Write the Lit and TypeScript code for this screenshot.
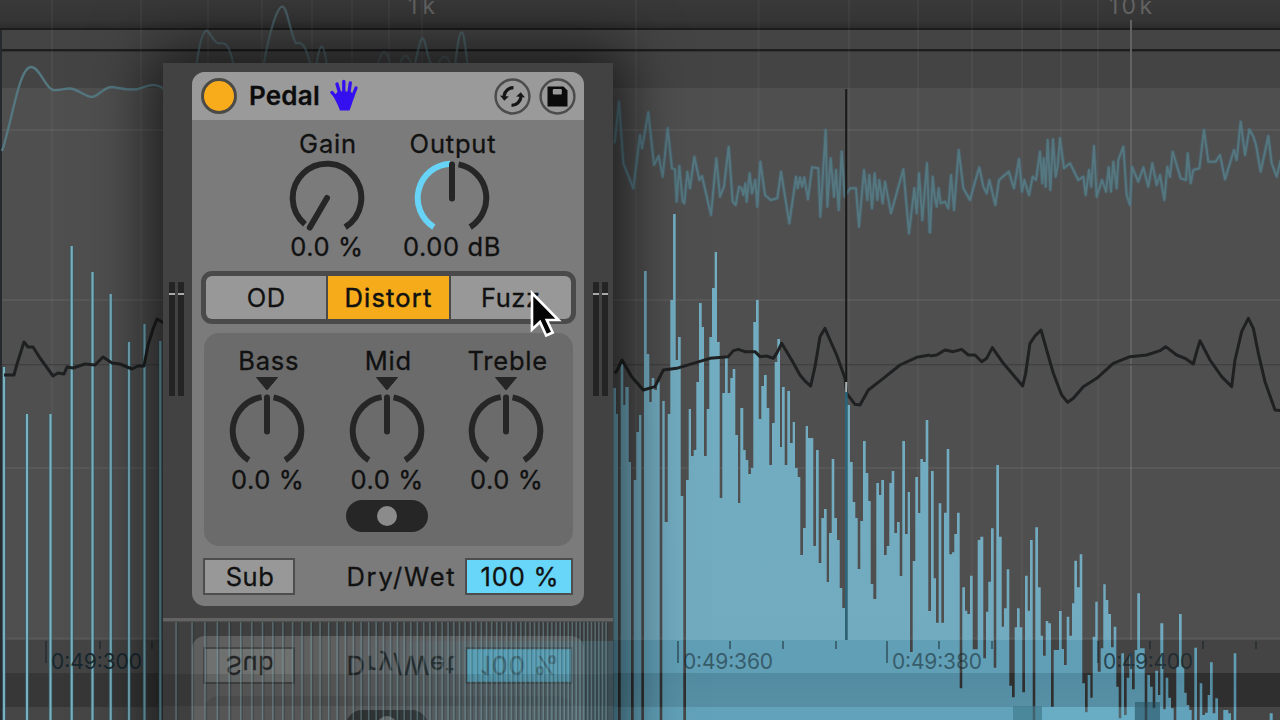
import { LitElement, html, svg, css } from "lit";
import { customElement, property } from "lit/decorators.js";

type Pt = number[];

// Spectrum silhouette, low-mid band: x start (third pixels), top y
const MID_BAND: Pt[] = [
  [40,388],[48,414],[54,720],[62,364],[70,405],[76,387],[86,462],[93,720],[101,480],[109,432],[117,415],[124,720],
  [132,271],[140,354],[148,402],[155,378],[163,390],[171,382],[179,720],[187,401],[194,522],[203,414],[211,300],
  [219,214],[227,360],[234,337],[242,496],[250,720],[258,480],[266,409],[273,456],[281,450],[289,382],[297,303],
  [305,327],[312,456],[320,409],[328,337],[336,288],[344,252],[351,342],[359,498],[367,393],[375,357],[383,393],
  [391,378],[398,369],[406,435],[414,503],[421,408],[430,450],[437,460],[445,474],[453,468],[460,322],[468,300],
  [476,419],[484,386],[492,375],[500,408],[508,465],[516,423],[524,362],[532,339],[540,447],[546,387],[554,465],
  [562,391],[570,443],[578,422],[585,468],[593,477],[601,555],[609,528],[617,426],[624,438],[640,546],[648,450],
  [656,563],[664,518],[672,509],[680,582],[687,533],[695,459],[703,518],[711,540],[719,588],[727,608],[735,640],
  [742,405],[750,462],[758,502],[766,518],[773,569],[781,521],[789,441],[797,473],[805,501],[812,584],[820,599],
  [829,483],[837,495],[844,480],[852,555],[860,546],[868,483],[875,471],[883,533],[891,522],[899,576],[907,441],
  [915,534],[923,492],[930,652],[938,561],[946,477],[954,513],[961,459],[969,462],[977,420],[985,611],[993,471],
];

// High band, both axes in third pixels from (930, 400)
const HIGH_BAND: Pt[] = [
  [3,213],[11,535],[18,668],[26,310],[34,668],[42,338],[50,147],[58,463],[66,457],[73,402],[81,338],[89,865],
  [97,562],[105,632],[112,642],[120,527],[128,748],[143,420],[151,410],[160,775],[168,635],[175,545],[183,385],
  [191,803],[199,195],[207,410],[215,680],[222,625],[230,508],[238,857],[246,892],[254,682],[261,625],[269,682],
  [277,877],[285,527],[293,632],[300,420],[308,960],[316,382],[324,562],[332,707],[339,767],[347,663],[355,670],
  [363,920],[371,750],[387,633],[395,747],[402,795],[410,650],[418,707],[426,610],[433,482],[441,562],[449,463],
  [457,850],[465,937],[473,825],[481,893],[488,710],[496,605],[503,815],[512,745],[520,553],[527,600],[535,642],
  [543,742],[551,680],[559,860],[566,955],[574,760],[582,945],[590,833],[598,760],[606,868],[614,750],[622,580],
  [630,745],[644,960],[652,825],[660,860],[668,925],[676,812],[684,885],[691,670],[700,928],[707,833],[715,893],
  [723,925],[731,960],[739,800],[747,642],[755,800],[763,878],[770,915],[778,930],[785,960],[793,743],[801,960],
  [809,850],[817,945],[825,938],[833,885],[840,787],[848,940],[856,895],[864,960],[880,930],[895,940],[903,960],
  [911,760],[919,960],[1019,940],[1028,960],
];

const LOW_BARS: Pt[] = [
  [4,367],[27,414],[50.5,414],[71.7,246],[92.5,272],[110.7,294],[129,342],[144.5,324],[160.3,341],
];

const harmonics = (): number[] => {
  const xs: number[] = [176, 192];
  let x = 192;
  while (x < 606) {
    x += 12.9 * Math.exp(-(x - 192) / 320);
    xs.push(x);
  }
  return xs;
};

const steps = (band: Pt[], sx: number, sy: number, ox: number, oy: number, endX: number): string => {
  let d = `M${(ox + band[0][0] * sx).toFixed(1)} 720`;
  band.forEach((p, i) => {
    const next = i + 1 < band.length ? band[i + 1][0] : endX;
    const y = (oy + p[1] * sy).toFixed(1);
    d += `L${(ox + p[0] * sx).toFixed(1)} ${y}L${(ox + next * sx).toFixed(1)} ${y}`;
  });
  return d + "V720Z";
};

const LIVE_A = "44,190 57,65 70,250 100,325 120,165 126,205 145,97 162,255 176,228 188,290 203,145 216,265 225,268 230,365 238,258 248,365 253,370 262,275 270,325 283,230 298,300 306,288 333,405 349,235 360,350 372,320 386,200 398,365 407,375 417,320 425,325 430,345 436,310 440,365 449,280 456,340 466,300 472,380 481,245 495,345 512,360 532,355 543,275 568,430 588,290 593,325 600,292 606,320 613,292 624,358 636,262 655,265 661,410 677,150 682,380 692,235 702,350 708,270 716,390 725,215 734,350 750,325 768,325 777,440 792,270 802,360 808,285 816,385 824,280 832,360 838,300 848,370 855,305 873,400 910,268 927,460 943,325 950,400 957,280 967,420 981,250 989,460";
const LIVE_B = "0,460 8,290 14,350 20,380 26,325 32,370 45,365 55,385 63,285 72,390 86,210 100,325 120,360 135,305 148,262 160,320 170,340 178,300 196,375 207,300 236,275 252,325 267,237 276,335 283,300 297,345 308,290 318,300 330,215 337,310 341,235 347,320 353,180 361,330 369,178 377,290 383,260 390,175 402,265 420,250 445,300 460,290 467,345 477,270 484,320 492,198 500,350 516,300 528,335 536,262 543,335 550,245 560,325 565,240 580,200 590,345 600,375 606,260 625,305 640,262 655,320 667,250 680,315 690,285 703,360 712,260 720,290 728,215 752,295 768,300 773,220 782,310 790,270 808,265 822,150 835,245 857,245 870,225 885,298 912,210 920,240 932,125 945,225 958,148 970,170 978,195 992,275 1015,168 1025,250 1040,290 1052,240";
const WAVE_A = "44,880 52,870 66,840 95,890 130,930 165,920 190,870 230,865 280,850 330,835 385,830 400,812 415,808 435,815 465,815 480,830 500,828 520,835 530,820 545,790 575,840 600,885 617,905 632,918 645,860 660,770 675,745 690,780 710,825 735,895 740,940 765,973 780,975 805,930 850,895 900,855 950,832 990,825";
const WAVE_B = "0,828 20,825 45,810 70,815 95,808 115,825 135,825 155,845 170,835 187,803 220,850 250,885 278,918 287,880 300,790 315,768 333,750 350,810 370,880 395,945 413,967 430,955 460,920 500,895 550,850 600,830 650,825 690,812 707,800 740,825 765,835 790,852 800,815 810,782 840,840 875,890 905,920 915,840 935,755 955,715 970,745 985,820 1005,905 1035,990 1052,992";

@customElement("spectrum-view")
class SpectrumView extends LitElement {
  static styles = css`
    :host { display: block; width: 100%; height: 100%; }
    svg { display: block; }
    text { font-family: Inter, "Liberation Sans", sans-serif; }
    .freq { font-size: 23px; fill: #626262; }
    .time { font-size: 21px; fill: #16262d; }
  `;
  render() {
    return html`<svg width="1280" height="720" viewBox="0 0 1280 720">
      <defs>
        <linearGradient id="bar" gradientUnits="userSpaceOnUse" x1="0" y1="0" x2="0" y2="720">
          <stop offset="0" stop-color="#72aec2"></stop>
          <stop offset=".889" stop-color="#72abc0"></stop>
          <stop offset=".889" stop-color="#609fb6"></stop>
          <stop offset=".935" stop-color="#609fb6"></stop>
          <stop offset=".935" stop-color="#538ca2"></stop>
          <stop offset=".982" stop-color="#5790a5"></stop>
          <stop offset=".982" stop-color="#62a2ba"></stop>
          <stop offset="1" stop-color="#62a2ba"></stop>
        </linearGradient>
        <linearGradient id="top" x1="0" y1="0" x2="0" y2="1">
          <stop offset="0" stop-color="#393939"></stop>
          <stop offset=".7" stop-color="#353535"></stop>
          <stop offset="1" stop-color="#2b2b2b"></stop>
        </linearGradient>
      </defs>
      <rect width="1280" height="720" fill="#4f4f4f"></rect>
      <rect width="1280" height="29" fill="url(#top)"></rect>
      <rect y="30" width="1280" height="58" fill="#444444"></rect>
      <rect y="28" width="1280" height="2" fill="#1c1c1c"></rect>
      <rect y="49" width="1280" height="2.4" fill="#1e1e1e"></rect>
      <rect y="640" width="1280" height="33" fill="#444444"></rect>
      <rect y="673" width="1280" height="34" fill="#2f2f2f"></rect>
      <rect y="707" width="1280" height="13" fill="#464646"></rect>
      <rect x="0" y="673" width="614" height="34" fill="#373737"></rect>
      <rect x="0" y="30" width="2" height="690" fill="#26292d"></rect>
      ${[51, 140, 207, 261, 311, 351, 388, 421, 635, 757.5, 848, 917, 971, 1021, 1060, 1097].map(
        (x) => svg`<rect x=${x} y="0" width="2" height="638" fill="#fff" opacity=".04"></rect>`,
      )}
      <rect x="1130" y="20" width="2" height="620" fill="#626262"></rect>
      ${[129, 299, 467, 637.5].map((y) => svg`<rect x="2" y=${y} width="1278" height="1.8" fill="#fff" opacity=".06"></rect>`)}
      <rect x="2" y="364" width="1278" height="1.3" fill="#414141"></rect>

      <g fill="none" stroke="#547780" stroke-linejoin="round">
        <path d="M2 151C12 122 19 67 31 67C40 67 45 88 53 90C62 91 67 87 73 89C82 92 86 97 92 97C99 96 104 87 112 87C121 88 128 91 138 89C147 86 155 82 164 89" stroke-width="2.4"></path>
        <g transform="translate(600 80) scale(.33333)">
          <polyline points=${LIVE_A} stroke="#4b6f80" stroke-width="12" opacity=".4"></polyline>
          <polyline points=${LIVE_A} stroke-width="6"></polyline>
        </g>
        <g transform="translate(930 80) scale(.33333)">
          <polyline points=${LIVE_B} stroke="#4b6f80" stroke-width="12" opacity=".4"></polyline>
          <polyline points=${LIVE_B} stroke-width="6"></polyline>
        </g>
        <g transform="translate(160 0) scale(.33333)" stroke-width="7" opacity=".6">
          <path d="M110 190C120 120 130 92 140 92C150 95 158 125 175 130C195 128 205 125 220 190M312 190C325 110 350 20 367 20C382 20 390 100 408 130C430 122 440 150 450 190M470 190Q485 90 500 190M765 190C775 150 780 115 788 115C796 115 800 165 812 190M886 190C893 130 898 97 905 97C912 97 916 140 922 190"></path>
          <path d="M655 190Q672 120 690 190M720 190Q735 145 755 190M835 190Q855 150 870 190" opacity=".6"></path>
        </g>
      </g>

      <path d=${steps(MID_BAND, 1 / 3, 1, 600, 0, 993)} fill="url(#bar)"></path>
      <path d=${steps(HIGH_BAND, 1 / 3, 1 / 3, 930, 400, 1050)} fill="url(#bar)"></path>
      ${LOW_BARS.map(([x, y]) => svg`<rect x=${x - 2.1} y=${y} width="4.2" height=${720 - y} fill="#2c5563" opacity=".5"></rect>
        <rect x=${x - 1.1} y=${y} width="2.2" height=${720 - y} fill="#78b1bf"></rect>`)}
      <rect x="1013" y="706" width="29" height="14" fill="#3d7689" opacity=".6"></rect>
      <rect x="1042" y="707" width="92" height="13" fill="#83d4ee" opacity=".22"></rect>
      <rect x="1135" y="702" width="25" height="18" fill="#1d4757" opacity=".5"></rect>

      <g fill="none" stroke="#1f2021" stroke-width="3" stroke-linejoin="round">
        <polyline points="4,375 14,375 17,364 24,342 28,347 33,347 40,358 53,376 58,373 64,374 67,367 73,368 85,364 95,365 103,357 112,363 120,364 132,369 138,366 144,366 148,345 153,329 157,319 164,323"></polyline>
        <g transform="translate(600 80) scale(.33333)" stroke-width="9"><polyline points=${WAVE_A}></polyline></g>
        <g transform="translate(930 80) scale(.33333)" stroke-width="9"><polyline points=${WAVE_B}></polyline></g>
      </g>
      <rect x="845.2" y="89" width="2" height="293" fill="#191919"></rect>
      <rect x="845.2" y="382" width="2" height="10" fill="#a9b3b5"></rect>
      <rect x="845" y="392" width="2.6" height="248" fill="#2b6476"></rect>

      <text class="freq" x="408" y="14" textLength="27">1k</text>
      <text class="freq" x="1109" y="14" textLength="43">10k</text>
      ${[45, 99, 151, 677, 729, 782, 835, 886, 938, 991, 1097, 1149, 1202, 1255].map(
        (x) => svg`<rect x=${x} y="641" width="2" height=${[45, 677, 886, 1097].includes(x) ? 22 : 8} fill="#111c22" opacity=".45"></rect>`,
      )}
      <text class="time" x="51" y="669" textLength="91" opacity=".95">0:49:300</text>
      <text class="time" x="683" y="669" textLength="90" opacity=".55">0:49:360</text>
      <text class="time" x="892" y="669" textLength="90" opacity=".55">0:49:380</text>
      <text class="time" x="1103" y="669" textLength="90" opacity=".75">0:49:400</text>
    </svg>`;
  }
}

@customElement("dial-knob")
class DialKnob extends LitElement {
  @property() label = "";
  @property() value = "";
  @property() kind: "min" | "half" | "center" = "center";
  static styles = css`
    :host { display: flex; flex-direction: column; align-items: center; }
    .label, .value { font-size: 25.500px; line-height: 28px; height: 28px; white-space: nowrap; color: #111; -webkit-text-stroke: .3px #111; }
    .label { margin-bottom: 2px; letter-spacing: .8px; padding-left: 3px; }
    .value { margin-top: -3px; letter-spacing: .6px; padding-left: 1px; }
    .mark { display: block; width: 24px; height: 14px; margin-bottom: 2px; }
    .dial { display: block; width: 76px; height: 76px; }
    .arc { fill: none; stroke: #262626; stroke-width: 6; }
    .lit { stroke: #67d4f7; }
    .hand { stroke: #262626; stroke-width: 6; stroke-linecap: round; }
  `;
  private arc(from: number, to: number): string {
    const r = 34.3;
    const p = (a: number) => {
      const t = (a * Math.PI) / 180;
      return `${(38 + r * Math.sin(t)).toFixed(2)} ${(38 - r * Math.cos(t)).toFixed(2)}`;
    };
    return `M${p(from)}A${r} ${r} 0 ${to - from > 180 ? 1 : 0} 1 ${p(to)}`;
  }
  render() {
    const min = this.kind === "min";
    const left = this.kind === "half" ? this.arc(-148, -3) : this.arc(-148, -9);
    return html`
      <div class="label">${this.label}</div>
      ${this.kind === "center"
        ? html`<svg class="mark" viewBox="0 0 24 14"><path d="M1.5 0.5H22.5L12 13Z" fill="#262626" stroke="#262626" stroke-linejoin="round"></path></svg>`
        : ""}
      <svg class="dial" viewBox="0 0 76 76">
        ${min
          ? svg`<path class="arc" d=${this.arc(-140, 148)}></path><path class="hand" d="M38 38L20.8 67.5"></path>`
          : svg`<path class=${this.kind === "half" ? "arc lit" : "arc"} d=${left}></path>
              <path class="arc" d=${this.arc(11, 148)}></path><path class="hand" d="M38 38.500V4.500"></path>`}
      </svg>
      <div class="value">${this.value}</div>`;
  }
}

@customElement("pedal-device")
class PedalDevice extends LitElement {
  // Only the lower edge of the panel: switch and footer
  @property({ type: Boolean }) lower = false;
  static styles = css`
    :host { display: block; box-sizing: border-box; width: 450px; height: 557px; color: #111; -webkit-text-stroke: .3px #111;
      font-family: Inter, "Liberation Sans", sans-serif; font-size: 25.500px; letter-spacing: .5px; }
    .frame { display: flex; height: 100%; box-sizing: border-box; background: #424242; padding-top: 9px; }
    .meter { display: flex; gap: 3px; width: 29px; box-sizing: border-box; padding: 210px 0 0 6px; }
    .meter.right { padding-left: 9px; }
    .level { width: 6px; height: 114px; background: linear-gradient(#242424 11px, #aaa 11px, #aaa 13.500px, #242424 13.500px); }
    .device { display: flex; flex-direction: column; width: 392px; height: 534px; border-radius: 13px; overflow: hidden; background: #7b7b7b; }
    .head { display: flex; align-items: center; height: 48px; box-sizing: border-box; background: #9a9a9a; padding: 0 8px 0 9px; }
    .power { width: 36px; height: 36px; box-sizing: border-box; border-radius: 50%; border: 3px solid #4b4a46; background: #f8ab1b; }
    .title { margin: -1px 0 0 12px; font-weight: 600; font-size: 26px; letter-spacing: .2px; color: #0c0c0c; width: 81px; }
    .hand { width: 28px; height: 32px; margin: -2px auto 0 0; }
    .ring { width: 37px; height: 37px; margin-left: 8px; }
    .top { display: flex; padding: 10px 0 0 72px; }
    .top dial-knob { width: 125px; }
    .modes { display: flex; gap: 2px; margin: 10px 8px 0 9px; height: 53px; box-sizing: border-box; border: 5px solid #4a4a4a; border-radius: 11px; background: #4a4a4a; }
    .mode { flex: 1; display: flex; align-items: center; justify-content: center; background: #989898; }
    .mode:first-child { border-radius: 6px 0 0 6px; }
    .mode:last-child { border-radius: 0 6px 6px 0; }
    .mode.on { background: #f6ab1b; letter-spacing: 1.2px; -webkit-text-stroke-width: .5px; }
    .eq { margin: 9px 11px 0 12px; height: 213px; box-sizing: border-box; border-radius: 15px; background: #6b6b6b; padding: 14px 0 0 3.500px; display: flex; flex-direction: column; }
    .bands { display: flex; }
    .bands dial-knob { width: 119.5px; }
    .switch { flex: none; width: 82px; height: 32px; border-radius: 16px; background: #262626; margin: auto 0 14px 138.5px; display: flex; align-items: center; justify-content: center; }
    .dot { width: 20px; height: 20px; border-radius: 50%; background: #8b8b8b; }
    .spacer { height: 252px; }
    .foot { display: flex; align-items: center; margin: 12px 11px 0 11px; height: 37px; }
    .box { height: 37px; box-sizing: border-box; border: 2.500px solid #4d4d4d; display: flex; align-items: center; justify-content: center; background: #989898; }
    .sub { width: 92px; margin-right: auto; padding-left: 2px; }
    .wet { width: 108px; background: #68d6f9; margin-left: 8.500px; letter-spacing: .8px; padding-left: 2px; }
    .caption { letter-spacing: 1.800px; }
  `;
  private upper() {
    return html`
        <div class="head">
          <div class="power"></div>
          <div class="title">Pedal</div>
          <svg class="hand" viewBox="0 0 28 32">
            <g stroke="#3410f0" stroke-width="3.300" stroke-linecap="round" fill="none">
              <path d="M2 13.500L8 20.500M7 5L10.500 17M13.800 2.500V16M20.300 4L18.500 17M26 9L22 19"></path>
            </g>
            <path d="M7.500 13Q14 11.500 22 13.500L24.500 17L21.500 26L19.500 31.500H10L8 26.500L3.500 17.500Z" fill="#3410f0"></path>
          </svg>
          <svg class="ring" viewBox="0 0 37 37">
            <circle cx="18.500" cy="18.500" r="16.900" fill="none" stroke="#4c4c4c" stroke-width="2.500"></circle>
            <g fill="none" stroke="#161616" stroke-width="3.200">
              <path d="M19.500 9.700A9.500 9.500 0 0 0 10 18"></path><path d="M17.500 27.300A9.500 9.500 0 0 0 27 19"></path>
            </g>
            <path d="M6 17.500L14.800 18.500L10.300 22.800Z" fill="#161616"></path>
            <path d="M31 19.500L22.200 18.500L26.700 14.200Z" fill="#161616"></path>
          </svg>
          <svg class="ring" viewBox="0 0 37 37">
            <circle cx="18.500" cy="18.500" r="16.900" fill="none" stroke="#4c4c4c" stroke-width="2.500"></circle>
            <path d="M9 8.500H24.500L28.500 12.500V28.500H8.500V9Z" fill="#0b0b0b"></path>
            <rect x="13.800" y="11" width="9" height="5.500" rx="1" fill="#9a9a9a"></rect>
          </svg>
        </div>
        <div class="top">
          <dial-knob label="Gain" value="0.0 %" kind="min"></dial-knob>
          <dial-knob label="Output" value="0.00 dB" kind="half"></dial-knob>
        </div>
        <div class="modes">
          <div class="mode">OD</div><div class="mode on">Distort</div><div class="mode">Fuzz</div>
        </div>`;
  }
  render() {
    return html`<div class="frame">
      <div class="meter"><div class="level"></div><div class="level"></div></div>
      <div class="device">
        ${this.lower ? html`<div class="spacer"></div>` : this.upper()}
        <div class="eq">
          ${this.lower
            ? ""
            : html`<div class="bands">
                <dial-knob label="Bass" value="0.0 %"></dial-knob>
                <dial-knob label="Mid" value="0.0 %"></dial-knob>
                <dial-knob label="Treble" value="0.0 %"></dial-knob>
              </div>`}
          <div class="switch"><div class="dot"></div></div>
        </div>
        <div class="foot">
          <div class="box sub">Sub</div><div class="caption">Dry/Wet</div><div class="box wet">100 %</div>
        </div>
      </div>
      <div class="meter right"><div class="level"></div><div class="level"></div></div>
    </div>`;
  }
}

@customElement("app-root")
class AppRoot extends LitElement {
  static styles = css`
    :host { display: block; position: relative; width: 1280px; height: 720px; overflow: hidden; background: #4f4f4f; }
    .shade { position: absolute; left: 163px; top: 63px; width: 450px; height: 700px; box-shadow: 0 0 58px 12px rgba(0, 0, 0, .68); }
    .floor { position: absolute; left: 163px; top: 620px; width: 450px; height: 100px; box-sizing: border-box; padding-top: 2px; overflow: hidden; background: #3c3d3e; }
    .mirror { transform: scaleY(-1); opacity: .56; }
    .comb { position: absolute; left: 163px; top: 617px; }
    .window { position: absolute; left: 163px; top: 63px; }
    .pointer { position: absolute; left: 527px; top: 286px; }
  `;
  render() {
    return html`
      <spectrum-view></spectrum-view>
      <div class="shade"></div>
      <div class="floor"><pedal-device class="mirror" lower aria-hidden="true"></pedal-device></div>
      <pedal-device class="window"></pedal-device>
      <svg class="comb" width="450" height="103" viewBox="163 617 450 103">
        <defs><linearGradient id="haze"><stop offset=".4" stop-color="#4c8294" stop-opacity="0"></stop><stop offset="1" stop-color="#4c8294" stop-opacity=".36"></stop></linearGradient></defs>
        <rect x="163" y="641" width="450" height="79" fill="url(#haze)"></rect>
        <rect x="468" y="650" width="102" height="31" fill="#5cb9d8" opacity=".38"></rect>
        <rect x="163" y="674" width="450" height="32" fill="#000" opacity=".12"></rect>
        ${harmonics().map(
          (x) => svg`<rect x=${x + 0.8} y="622" width="1.400" height="98" fill="#1c2629" opacity=".26"></rect>
          <rect x=${x - 0.7} y="622" width="1.500" height="98" fill="#7fa9b0" opacity=".42"></rect>`,
        )}
        <rect x="163" y="618" width="450" height="3.500" fill="#636363"></rect>
      </svg>
      <svg class="pointer" width="40" height="56" viewBox="0 0 40 56">
        <path d="M5 7V43.500L13 36L19.200 49.500L25.700 46.500L19.800 34H31.500Z" fill="#050505" stroke="#fff" stroke-width="2.600" stroke-linejoin="miter"></path>
      </svg>`;
  }
}
